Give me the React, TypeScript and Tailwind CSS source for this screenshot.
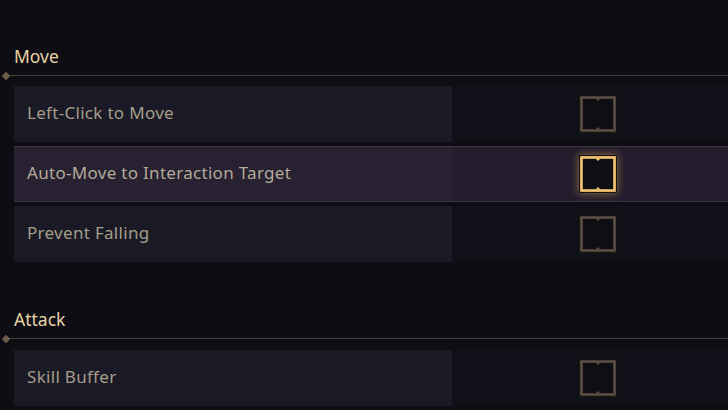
import React, { useState } from 'react';

type Option = { id: string; label: string; checked: boolean };

const sections: { title: string; options: Option[] }[] = [
  {
    title: 'Move',
    options: [
      { id: 'left-click', label: 'Left-Click to Move', checked: false },
      { id: 'auto-move', label: 'Auto-Move to Interaction Target', checked: false },
      { id: 'prevent-falling', label: 'Prevent Falling', checked: false },
    ],
  },
  {
    title: 'Attack',
    options: [{ id: 'skill-buffer', label: 'Skill Buffer', checked: false }],
  },
];

const CheckBox: React.FC<{ active: boolean; checked: boolean }> = ({ active, checked }) => {
  const color = active ? '#f4c66e' : '#5b4f43';
  return (
    <svg
      width="38"
      height="38"
      viewBox="0 0 38 38"
      className={active ? 'drop-shadow-[0_0_4px_rgba(240,180,90,0.6)]' : ''}
    >
      <rect x="0.5" y="0.5" width="37" height="37" fill="none" stroke="#17130f" strokeWidth="1" />
      <rect x="2.5" y="2.5" width="33" height="33" fill="#0e0e15" stroke={color} strokeWidth="2.6" />
      <polygon points="16.5,3.5 21.5,3.5 19,6" fill={color} />
      <polygon points="16.5,34.5 21.5,34.5 19,32" fill={color} />
      {checked && <rect x="10" y="10" width="18" height="18" fill={color} />}
    </svg>
  );
};

const Divider: React.FC = () => (
  <div className="relative h-[1px] ml-[4px] bg-[#463d32]">
    <span className="absolute left-[-1px] top-[-2.5px] w-[6px] h-[6px] rotate-45 bg-[#6b5d4a]" />
  </div>
);

export default function App() {
  const [hovered, setHovered] = useState('auto-move');
  const [values, setValues] = useState<Record<string, boolean>>(() =>
    Object.fromEntries(sections.flatMap((s) => s.options.map((o) => [o.id, o.checked])))
  );

  return (
    <div
      className="w-[728px] h-[410px] overflow-hidden bg-[#0e0d13] pt-[44px]"
      style={{ fontFamily: '"Noto Sans", "Open Sans", sans-serif' }}
    >
      {sections.map((section, i) => (
        <div key={section.title} className={i > 0 ? 'mt-[45px]' : ''}>
          <h2 className="pl-[14px] h-[24px] text-[17.5px] leading-[24px] text-[#e8d3a6]">{section.title}</h2>
          <div className="mt-[7px]">
            <Divider />
          </div>
          <div className={`${i > 0 ? 'mt-[11px]' : 'mt-[10px]'} flex flex-col gap-[4px] pl-[14px]`}>
            {section.options.map((opt) => {
              const active = hovered === opt.id;
              return (
                <div
                  key={opt.id}
                  onMouseEnter={() => setHovered(opt.id)}
                  onClick={() => setValues((v) => ({ ...v, [opt.id]: !v[opt.id] }))}
                  className={`flex h-[56px] cursor-pointer ${
                    active ? 'bg-[#231d2d] border-y border-[#3a3344]' : 'bg-[#101019]'
                  }`}
                >
                  <div
                    className={`w-[438px] flex items-center pl-[13px] pb-[2px] text-[17px] tracking-[0.3px] ${
                      active ? 'bg-[#282131] text-[#b3aa99]' : 'bg-[#191a25] text-[#a69d8b]'
                    }`}
                  >
                    {opt.label}
                  </div>
                  <div className="flex items-center pl-[127px]">
                    <CheckBox active={active} checked={values[opt.id]} />
                  </div>
                </div>
              );
            })}
          </div>
        </div>
      ))}
    </div>
  );
}
